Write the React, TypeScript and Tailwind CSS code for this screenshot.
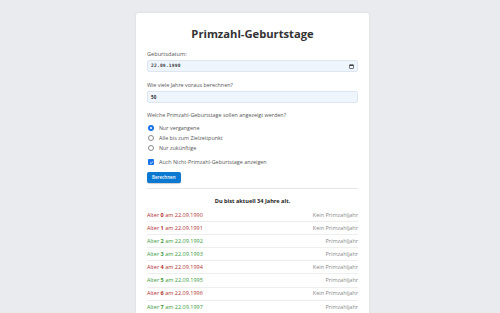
import React from "react";

const rows = [
  { age: 0, date: "22.09.1990", prime: false },
  { age: 1, date: "22.09.1991", prime: false },
  { age: 2, date: "22.09.1992", prime: true },
  { age: 3, date: "22.09.1993", prime: true },
  { age: 4, date: "22.09.1994", prime: false },
  { age: 5, date: "22.09.1995", prime: true },
  { age: 6, date: "22.09.1996", prime: false },
  { age: 7, date: "22.09.1997", prime: true },
  { age: 8, date: "22.09.1998", prime: false },
];

function Radio({ checked, label }: { checked?: boolean; label: string }) {
  return (
    <div className="flex items-center gap-[5px] h-[10px]">
      <span
        className={
          checked
            ? "w-[6px] h-[6px] rounded-full border-[2px] border-[#1a73e8] bg-white"
            : "w-[6px] h-[6px] rounded-full border border-[#8a8a8a] bg-white"
        }
      />
      <span>{label}</span>
    </div>
  );
}

export default function App() {
  return (
    <div
      className="w-[500px] h-[313px] overflow-hidden bg-[#e9ebee] pt-[13px]"
      style={{ fontFamily: '"Open Sans", "Noto Sans", sans-serif' }}
    >
      <div className="ml-[136px] w-[233px] bg-white rounded-[3px] shadow-[0_0_3px_rgba(0,0,0,0.08)] px-[11px] pt-[14px] pb-4">
        <h1 className="text-center text-[11.2px] font-bold text-[#333] leading-[13px] mb-[11px]">
          Primzahl-Geburtstage
        </h1>

        <div className="text-[5.6px] text-[#555] leading-[7px] mb-[2px]">Geburtsdatum:</div>
        <div className="h-[12px] rounded-[2px] border border-[#dde6f0] bg-[#eef5fd] flex items-center justify-between px-[3px] mb-[10px]">
          <span className="text-[4.6px] font-bold text-[#444] tracking-[0.2px]" style={{ fontFamily: '"DejaVu Sans Mono", monospace' }}>
            22.09.1990
          </span>
          <svg width="5" height="5" viewBox="0 0 10 10">
            <rect x="1" y="1.5" width="8" height="7.5" rx="1" fill="none" stroke="#444" strokeWidth="1.4" />
            <rect x="1" y="1.5" width="8" height="2.5" fill="#444" />
          </svg>
        </div>

        <div className="text-[5.4px] text-[#555] leading-[7px] mb-[2px]">Wie viele Jahre voraus berechnen?</div>
        <div className="h-[12px] rounded-[2px] border border-[#dde6f0] bg-[#eef5fd] flex items-center px-[3px] mb-[9px]">
          <span className="text-[4.6px] text-[#333] font-bold">50</span>
        </div>

        <div className="text-[5.4px] text-[#555] leading-[7px] mb-[4px]">
          Welche Primzahl-Geburtstage sollen angezeigt werden?
        </div>
        <div className="flex flex-col text-[5.4px] text-[#555] pl-[1px] mb-[4px]">
          <Radio checked label="Nur vergangene" />
          <Radio label="Alle bis zum Zielzeitpunkt" />
          <Radio label="Nur zukünftige" />
        </div>
        <div className="flex items-center gap-[5px] h-[10px] text-[5.4px] text-[#555] pl-[1px] mb-[5px]">
          <span className="w-[6px] h-[6px] rounded-[1px] bg-[#1a73e8] flex items-center justify-center">
            <svg width="5" height="5" viewBox="0 0 10 10">
              <path d="M2 5.2 L4.2 7.3 L8 2.8" fill="none" stroke="#fff" strokeWidth="1.6" />
            </svg>
          </span>
          <span>Auch Nicht-Primzahl-Geburtstage anzeigen</span>
        </div>
        <button className="block h-[11px] px-[5px] rounded-[2px] bg-[#0b78d1] text-white text-[4.5px] font-semibold leading-[11px] shadow-[0_1px_1px_rgba(0,0,0,0.2)] mb-[5px]">
          Berechnen
        </button>
        <div className="border-t border-[#e6e6e6] mb-[8px]" />

        <div className="text-center text-[5.6px] font-bold text-[#222] leading-[8px] mb-[4px]">
          Du bist aktuell 34 Jahre alt.
        </div>

        <div className="flex flex-col">
          {rows.map((r) => (
            <div
              key={r.age}
              className="flex items-center justify-between h-[13.1px] border-b border-[#eeeeee] text-[5.5px]"
            >
              <span className={r.prime ? "text-[#3a9a3a]" : "text-[#b03030]"}>
                Alter <span className="font-bold">{r.age}</span> am {r.date}
              </span>
              <span className="text-[#888]">{r.prime ? "Primzahljahr" : "Kein Primzahljahr"}</span>
            </div>
          ))}
        </div>
      </div>
    </div>
  );
}
